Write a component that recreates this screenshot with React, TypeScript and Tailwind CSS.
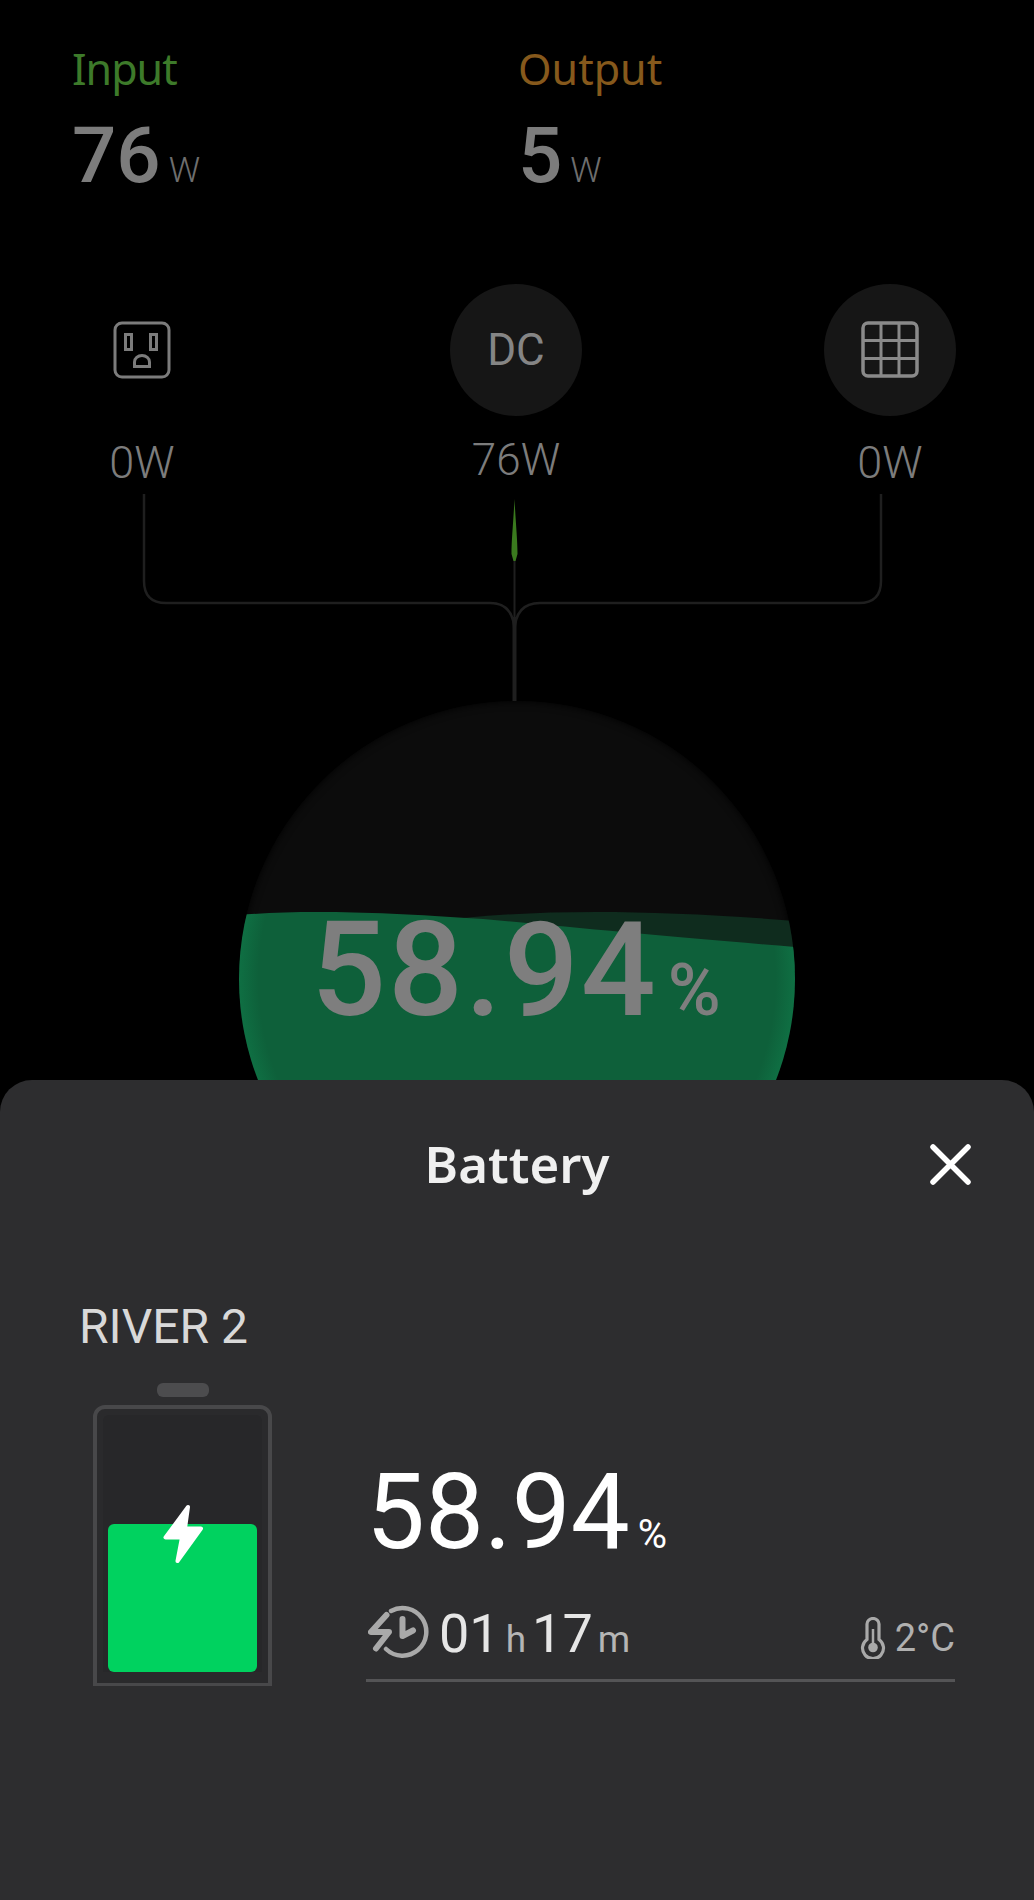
import React from 'react';

function OutletIcon() {
  return (
    <svg width="58" height="58" viewBox="0 0 58 58" fill="none" stroke="#7c7c7c" strokeWidth="3">
      <rect x="2" y="2" width="54" height="54" rx="7" />
      <rect x="12.5" y="13.5" width="6" height="15" />
      <rect x="37.5" y="13.5" width="6" height="15" />
      <path d="M21.5 45.5 V41 A7.5 6.5 0 0 1 36.5 41 V45.5 Z" />
    </svg>
  );
}

function PanelIcon() {
  return (
    <svg width="58" height="58" viewBox="0 0 58 58" fill="none" stroke="#8a8a8a" strokeWidth="3">
      <rect x="2" y="2" width="54" height="53" rx="5" strokeWidth="3.5" />
      <path d="M20 2 V55 M38 2 V55 M2 19.5 H56 M2 37.5 H56" />
    </svg>
  );
}

function Connector() {
  return (
    <svg className="block" width="1034" height="209" viewBox="0 0 1034 209" fill="none">
      <path d="M144 2 V89 Q144 111 166 111 H490 Q514 111 514.5 140" stroke="#1f1f1f" strokeWidth="2.5" />
      <path d="M881 2 V89 Q881 111 859 111 H540 Q515 111 514.5 140" stroke="#1f1f1f" strokeWidth="2.5" />
      <path d="M514.5 66 V130" stroke="#1f1f1f" strokeWidth="2" />
      <path d="M514.5 125 V209" stroke="#1f1f1f" strokeWidth="4" />
      <path d="M514.5 7 C515.5 28 517.5 48 517.5 62 L515.5 69 H513.5 L511.5 62 C511.5 48 513.5 28 514.5 7 Z" fill="#3a7a1e" />
    </svg>
  );
}

function Sphere() {
  return (
    <div className="relative h-[556px] w-[556px] mx-auto overflow-hidden rounded-full bg-[#0c0c0c] shadow-[inset_0_0_8px_#000]">
      <svg className="absolute inset-0" width="556" height="556" viewBox="0 0 556 556">
        <defs>
          <radialGradient id="water" cx="278" cy="278" r="278" gradientUnits="userSpaceOnUse">
            <stop offset="0.93" stopColor="#0e603a" />
            <stop offset="1" stopColor="#0f6f43" />
          </radialGradient>
        </defs>
        <path d="M200 220 C290 208 410 208 556 220 V270 H200 Z" fill="#0f2c1e" />
        <path d="M0 214 C60 209 130 210 244 218 C330 226 430 236 556 246 V556 H0 Z" fill="url(#water)" />
      </svg>
      <div className="absolute left-[72px] top-[194px] flex items-baseline font-medium text-[#7e7e7e] font-['Roboto',sans-serif]">
        <span className="text-[132px] leading-[150px] tracking-[2px]">58.94</span>
        <span className="ml-[10px] text-[72px] leading-[62px]">%</span>
      </div>
    </div>
  );
}

function BatteryGraphic() {
  return (
    <div className="flex w-[179px] flex-col items-center">
      <div className="h-[14px] w-[52px] rounded-[6px] bg-[#4c4c4e]" />
      <div className="mt-[8px] h-[281px] w-[179px] rounded-t-[12px] border-x-[4px] border-t-[4px] border-b-[3px] border-[#48484a] bg-[#2a2a2c] p-[6px] pb-[11px]">
        <div className="relative flex h-full flex-col justify-end rounded-t-[6px] bg-[#272729] px-[5px]">
          <div className="h-[148px] rounded-[6px] bg-[#00d25f]" />
          <svg className="absolute left-[60px] top-[89px]" width="40" height="60" viewBox="0 0 40 60">
            <path d="M25 3 L2.5 33.5 H19 L14.5 57 L38 24.5 H22 Z" fill="#fff" stroke="#fff" strokeWidth="4" strokeLinejoin="round" />
          </svg>
        </div>
      </div>
    </div>
  );
}

function ChargeClockIcon() {
  return (
    <svg className="mb-1 ml-[2px] shrink-0" width="62" height="54" viewBox="0 0 62 54" fill="none" stroke="#a9a9a9" strokeLinecap="round" strokeLinejoin="round">
      <path d="M23 6 A23.8 23.8 0 1 1 18 44" strokeWidth="4.5" />
      <path d="M34.5 14 V31 L45 25.5" strokeWidth="6" />
      <path d="M18.5 10 L3 27 H21 L8 43.5" strokeWidth="6" />
    </svg>
  );
}

function ThermometerIcon() {
  return (
    <svg className="shrink-0" width="26" height="42" viewBox="0 0 26 42" fill="none" stroke="#a9a9a9">
      <path d="M7 7 a6 5.5 0 0 1 12 0 V22.5 a10.5 10.5 0 1 1 -12 0 Z" strokeWidth="3.2" />
      <path d="M13 12 V30" strokeWidth="2.5" />
      <circle cx="13" cy="30.5" r="4.8" fill="#a9a9a9" stroke="none" />
    </svg>
  );
}

export default function App() {
  return (
    <div className="w-[1034px] bg-black font-['Roboto',sans-serif]">
      {/* dimmed power flow behind the sheet */}
      <section className="h-[1080px] overflow-hidden">
        <div className="flex pl-[72px] pt-[45px]">
          <div className="w-[446px]">
            <div className="font-['Noto_Sans',sans-serif] text-[43px] leading-[48px] tracking-[-1px] text-[#3d7a2a]">Input</div>
            <div className="mt-[23px] flex items-baseline text-[#7c7c7c]">
              <span className="text-[78px] leading-[80px] font-medium">76</span>
              <span className="ml-[8px] text-[35px] leading-[40px] font-light text-[#6e6e6e]">W</span>
            </div>
          </div>
          <div>
            <div className="font-['Noto_Sans',sans-serif] text-[43px] leading-[48px] text-[#86591c]">Output</div>
            <div className="mt-[23px] flex items-baseline text-[#7c7c7c]">
              <span className="text-[78px] leading-[80px] font-medium">5</span>
              <span className="ml-[8px] text-[35px] leading-[40px] font-light text-[#6e6e6e]">W</span>
            </div>
          </div>
        </div>

        <div className="mt-[88px] flex h-[208px] justify-between pl-[76px] pr-[78px] text-[#7c7c7c]">
          <div className="flex w-[132px] flex-col items-center">
            <div className="flex h-[132px] w-[132px] items-center justify-center">
              <OutletIcon />
            </div>
            <div className="mt-[22px] text-[45px] leading-[50px] font-light">0W</div>
          </div>
          <div className="flex w-[132px] flex-col items-center">
            <div className="flex h-[132px] w-[132px] items-center justify-center rounded-full bg-[#161616] text-[44px] text-[#858585]">
              DC
            </div>
            <div className="mt-[19px] text-[44px] leading-[50px] font-light">76W</div>
          </div>
          <div className="flex w-[132px] flex-col items-center">
            <div className="flex h-[132px] w-[132px] items-center justify-center rounded-full bg-[#161616]">
              <PanelIcon />
            </div>
            <div className="mt-[22px] text-[45px] leading-[50px] font-light">0W</div>
          </div>
        </div>

        <Connector />
        <Sphere />
      </section>

      {/* battery sheet */}
      <section className="h-[820px] rounded-t-[32px] bg-[#2d2d2f] pt-[53px]">
        <div className="grid grid-cols-[1fr_auto_1fr] items-center">
          <div />
          <h2 className="font-['Noto_Sans',sans-serif] text-[51px] leading-[60px] font-semibold text-[#f0f0f0]">Battery</h2>
          <div className="mt-[3px] flex justify-end pr-[63px]">
            <svg width="41" height="41" viewBox="0 0 41 41" fill="none" stroke="#fff" strokeWidth="5.5" strokeLinecap="round">
              <path d="M3 3 L38 38 M38 3 L3 38" />
            </svg>
          </div>
        </div>

        <div className="mt-[107px] pl-[79px] text-[48px] leading-[54px] text-[#d9d9d9]">RIVER 2</div>

        <div className="mt-[29px] flex pl-[93px]">
          <BatteryGraphic />
          <div className="ml-[94px] w-[589px] pt-[75px]">
            <div className="flex items-baseline text-white">
              <span className="text-[105px] leading-[110px]">58.94</span>
              <span className="ml-[8px] text-[40px] leading-[40px]">%</span>
            </div>
            <div className="mt-[36px] flex items-center justify-between">
              <div className="flex items-center">
                <ChargeClockIcon />
                <div className="ml-[9px] flex items-baseline text-[#e6e6e6]">
                  <span className="text-[54px] leading-[60px]">01</span>
                  <span className="ml-[6px] text-[37px] leading-[40px] text-[#b5b5b5]">h</span>
                  <span className="ml-[6px] text-[54px] leading-[60px]">17</span>
                  <span className="ml-[5px] text-[37px] leading-[40px] text-[#b5b5b5]">m</span>
                </div>
              </div>
              <div className="flex items-center pt-[8px] text-[38px] leading-[44px] text-[#b0b0b0]">
                <ThermometerIcon />
                <span className="ml-[9px]">2°C</span>
              </div>
            </div>
            <div className="mt-[15px] h-[3px] bg-[#545456]" />
          </div>
        </div>
      </section>
    </div>
  );
}
